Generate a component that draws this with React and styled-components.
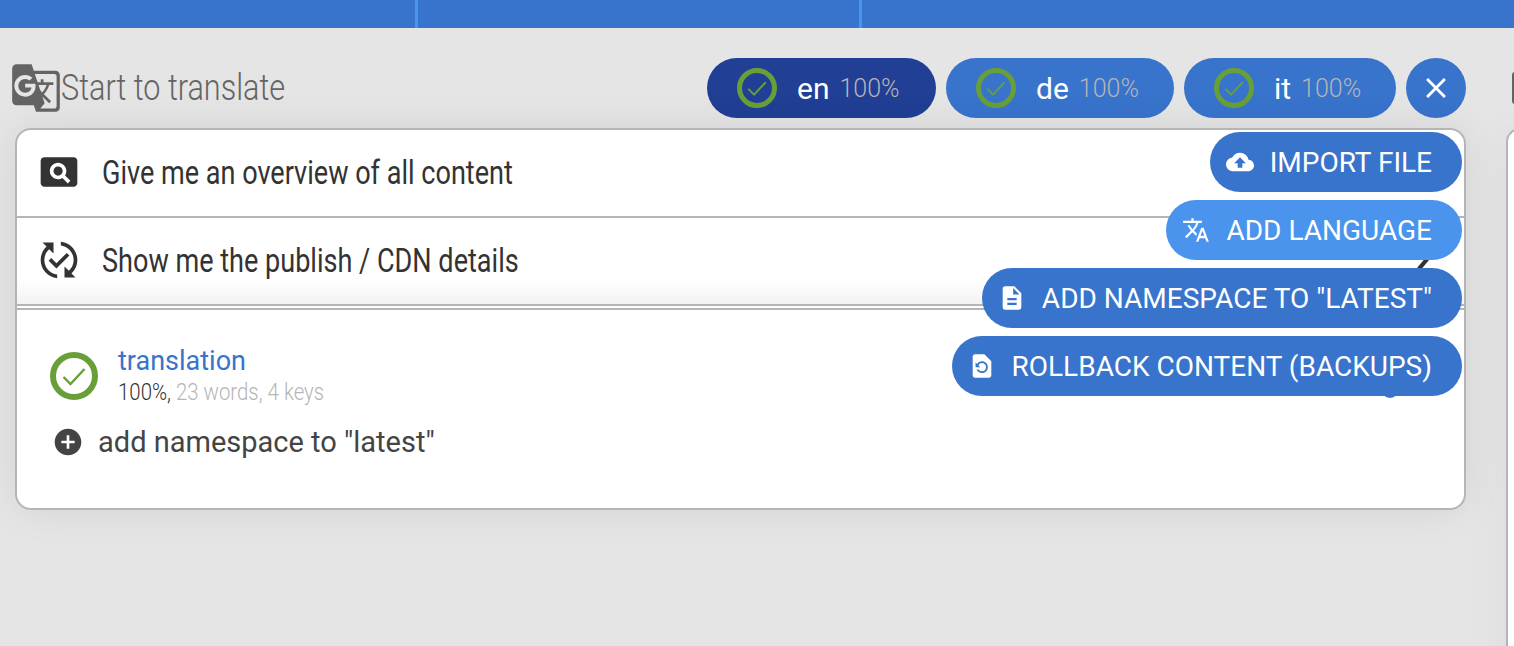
import React from 'react';
import styled, { createGlobalStyle } from 'styled-components';
import {
  MdGTranslate,
  MdClose,
  MdCloudUpload,
  MdTranslate,
  MdDescription,
  MdRestorePage,
  MdPageview,
  MdPublishedWithChanges,
  MdAddCircle,
} from 'react-icons/md';

const GlobalStyle = createGlobalStyle`
  html, body {
    margin: 0;
    height: 100%;
    overflow: hidden;
    background: #e5e5e5;
    font-family: Roboto, "Liberation Sans", sans-serif;
  }
  * { box-sizing: border-box; }
`;

const languages = [
  { code: 'en', percent: '100%', active: true, width: 229 },
  { code: 'de', percent: '100%', width: 228 },
  { code: 'it', percent: '100%', width: 212 },
];

const actions = [
  { label: 'IMPORT FILE', icon: MdCloudUpload },
  { label: 'ADD LANGUAGE', icon: MdTranslate, hovered: true },
  { label: 'ADD NAMESPACE TO "LATEST"', icon: MdDescription },
  { label: 'ROLLBACK CONTENT (BACKUPS)', icon: MdRestorePage },
];

const StatusRing = ({ size }) => (
  <svg width={size} height={size} viewBox="0 0 48 48" fill="none">
    <circle cx="24" cy="24" r="21" stroke="#689f38" strokeWidth="6" />
    <path d="M13.5 25l7 7 14-15" stroke="#689f38" strokeWidth="2.4" />
  </svg>
);

const App = () => (
  <Page>
    <GlobalStyle />
    <TopBar>
      <TopTab $width={418} />
      <TopTab $width={444} />
      <TopTab $width={652} />
    </TopBar>
    <Main>
      <Column>
        <Header>
          <Title>
            <MdGTranslate size={52} />
            <TitleText>Start to translate</TitleText>
          </Title>
          <Pills>
            {languages.map((lang) => (
              <LangPill key={lang.code} $active={lang.active} $width={lang.width}>
                <StatusRing size={40} />
                <LangCode>{lang.code}</LangCode>
                <LangPercent>{lang.percent}</LangPercent>
              </LangPill>
            ))}
            <CloseButton>
              <MdClose size={34} />
            </CloseButton>
          </Pills>
        </Header>
        <Card>
          <InfoRow>
            <MdPageview size={44} />
            <RowText>Give me an overview of all content</RowText>
          </InfoRow>
          <InfoRow $fade>
            <MdPublishedWithChanges size={44} />
            <RowText>Show me the publish / CDN details</RowText>
            <PeekChevron />
          </InfoRow>
          <CardBody>
            <Namespace>
              <StatusRing size={48} />
              <div>
                <NamespaceName>translation</NamespaceName>
                <NamespaceStats>
                  <StatsPercent>100%,</StatsPercent> 23 words, 4 keys
                </NamespaceStats>
              </div>
            </Namespace>
            <AddNamespace>
              <MdAddCircle size={32} />
              add namespace to "latest"
            </AddNamespace>
          </CardBody>
          <PeekDot />
          <ActionMenu>
            {actions.map(({ label, icon: Icon, hovered }) => (
              <ActionButton key={label} $hovered={hovered}>
                <Icon size={28} />
                {label}
              </ActionButton>
            ))}
          </ActionMenu>
        </Card>
      </Column>
      <NextColumn>
        <NextHeader>
          <NextIcon />
        </NextHeader>
        <NextCard />
      </NextColumn>
    </Main>
  </Page>
);

const Page = styled.div`
  width: 1514px;
  height: 646px;
  overflow: hidden;
  display: flex;
  flex-direction: column;
`;

const TopBar = styled.div`
  flex: 0 0 28px;
  display: flex;
  background: #3873cc;
`;

const TopTab = styled.div`
  width: ${(p) => p.$width}px;
  border-right: 3px solid #4a94ee;

  &:last-child {
    border-right: 0;
  }
`;

const Main = styled.div`
  flex: 1;
  display: flex;
  gap: 40px;
  padding: 30px 0 0 15px;
`;

const Column = styled.div`
  flex: 0 0 1451px;
`;

const Header = styled.div`
  height: 60px;
  margin-bottom: 10px;
  display: flex;
  align-items: center;
  justify-content: space-between;
`;

const Title = styled.div`
  display: flex;
  align-items: center;
  gap: 0;
  color: #646464;

  svg {
    margin: 0 -1px 0 -5px;
  }
`;

const TitleText = styled.span`
  display: inline-block;
  font-size: 36px;
  font-weight: 300;
  white-space: nowrap;
  transform: scaleX(0.85);
  transform-origin: left center;
`;

const Pills = styled.div`
  display: flex;
  gap: 10px;
`;

const LangPill = styled.div`
  width: ${(p) => p.$width}px;
  height: 60px;
  padding-left: 30px;
  display: flex;
  align-items: center;
  border-radius: 30px;
  background: ${(p) => (p.$active ? '#203f95' : '#3873cc')};
  color: #fff;
`;

const LangCode = styled.span`
  margin-left: 20px;
  font-size: 30px;
`;

const LangPercent = styled.span`
  margin-left: 10px;
  font-size: 25px;
  font-weight: 300;
  color: #b5b5b5;
`;

const CloseButton = styled.div`
  width: 60px;
  height: 60px;
  display: flex;
  align-items: center;
  justify-content: center;
  border-radius: 50%;
  background: #3873cc;
  color: #fff;
`;

const Card = styled.div`
  position: relative;
  height: 382px;
  border: 2px solid #b5b5b5;
  border-radius: 16px;
  background: #fff;
  box-shadow: 0 0 40px rgba(0, 0, 0, 0.08);
`;

const InfoRow = styled.div`
  position: relative;
  height: ${(p) => (p.$fade ? '88px' : '88px')};
  padding-left: 20px;
  display: flex;
  align-items: center;
  gap: 21px;
  padding-bottom: 2px;
  border-bottom: 2px solid #b5b5b5;
  color: #333;
  background: ${(p) => (p.$fade ? 'linear-gradient(#fff 70%, #f3f3f3)' : 'transparent')};

  &:first-child {
    height: 88px;
    border-radius: 14px 14px 0 0;
  }
`;

const RowText = styled.span`
  display: inline-block;
  font-size: 33px;
  white-space: nowrap;
  transform: scaleX(0.82);
  transform-origin: left center;
`;

const PeekChevron = styled.span`
  position: absolute;
  left: 1404px;
  top: 39px;
  width: 4px;
  height: 14px;
  background: #333;
  transform: rotate(40deg);
`;

const CardBody = styled.div`
  margin-top: 2px;
  border-top: 2px solid #b5b5b5;
  padding: 35px 0 0 33px;
`;

const Namespace = styled.div`
  display: flex;
  align-items: center;
  gap: 20px;
`;

const NamespaceName = styled.div`
  font-size: 27px;
  line-height: 32px;
  color: #3873cc;
`;

const NamespaceStats = styled.div`
  font-size: 24px;
  line-height: 30px;
  font-weight: 300;
  color: #b5b5b5;
  white-space: nowrap;
  transform: scaleX(0.85);
  transform-origin: left center;
`;

const StatsPercent = styled.span`
  color: #333;
`;

const AddNamespace = styled.div`
  margin-top: 18px;
  display: flex;
  align-items: center;
  gap: 14px;
  margin-left: 2px;
  font-size: 29px;
  color: #444;
`;

const PeekDot = styled.span`
  position: absolute;
  left: 1364px;
  top: 258px;
  width: 18px;
  height: 10px;
  border-radius: 0 0 9px 9px;
  background: #3873cc;
`;

const ActionMenu = styled.div`
  position: absolute;
  top: 2px;
  right: 2px;
  display: flex;
  flex-direction: column;
  align-items: flex-end;
  gap: 8px;
`;

const ActionButton = styled.div`
  height: 60px;
  padding: 0 30px 0 16px;
  display: flex;
  align-items: center;
  gap: 16px;
  border-radius: 30px;
  white-space: nowrap;
  font-size: 28px;
  color: #fff;
  background: ${(p) => (p.$hovered ? '#4a94ee' : '#3873cc')};
`;

const NextColumn = styled.div`
  flex: 1;
`;

const NextHeader = styled.div`
  height: 60px;
  margin-bottom: 10px;
  display: flex;
  align-items: center;
`;

const NextIcon = styled.span`
  width: 8px;
  height: 32px;
  margin-left: 6px;
  border-radius: 3px 0 0 3px;
  background: #646464;
`;

const NextCard = styled.div`
  height: 600px;
  border: 2px solid #b5b5b5;
  border-right: 0;
  border-radius: 16px 0 0 16px;
  background: #fff;
  box-shadow: 0 0 40px rgba(0, 0, 0, 0.08);
`;

export default App;
